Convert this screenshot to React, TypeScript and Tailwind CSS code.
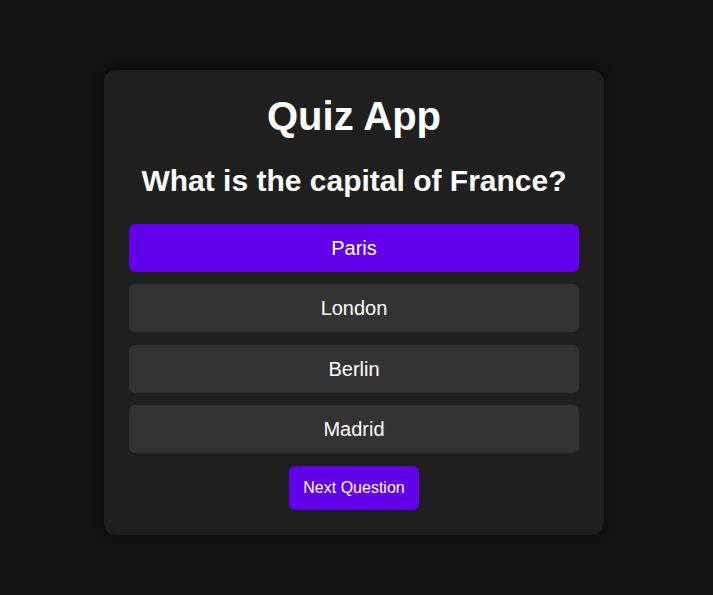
import React, { useState } from "react";

const options = ["Paris", "London", "Berlin", "Madrid"];

export default function App() {
  const [selected, setSelected] = useState("Paris");
  return (
    <div
      className="min-h-[595px] w-full bg-[#121212] flex justify-center items-start pt-[70px] pr-[5px] text-white"
      style={{ fontFamily: '"Liberation Sans", Arial, sans-serif' }}
    >
      <div className="w-[500px] bg-[#1f1f1f] rounded-xl shadow-[0_0_10px_rgba(0,0,0,0.5)] px-[25px] pt-[22px] pb-[25px] flex flex-col items-center">
        <h1 className="text-[40px] leading-[48px] font-bold text-center">Quiz App</h1>
        <h2 className="mt-[22.5px] text-[30px] leading-[36px] font-bold text-center">
          What is the capital of France?
        </h2>
        <div className="mt-[25.4px] w-full flex flex-col gap-[12.5px]">
          {options.map((o) => (
            <button
              key={o}
              onClick={() => setSelected(o)}
              className={`w-full h-12 rounded-md text-[20px] text-white flex items-center justify-center ${
                selected === o ? "bg-[#6200ea]" : "bg-[#333333]"
              }`}
            >
              {o}
            </button>
          ))}
        </div>
        <button className="mt-[12.5px] w-[130px] h-[44.5px] rounded-md bg-[#6200ea] text-[16px] text-white flex items-center justify-center">
          Next Question
        </button>
      </div>
    </div>
  );
}
